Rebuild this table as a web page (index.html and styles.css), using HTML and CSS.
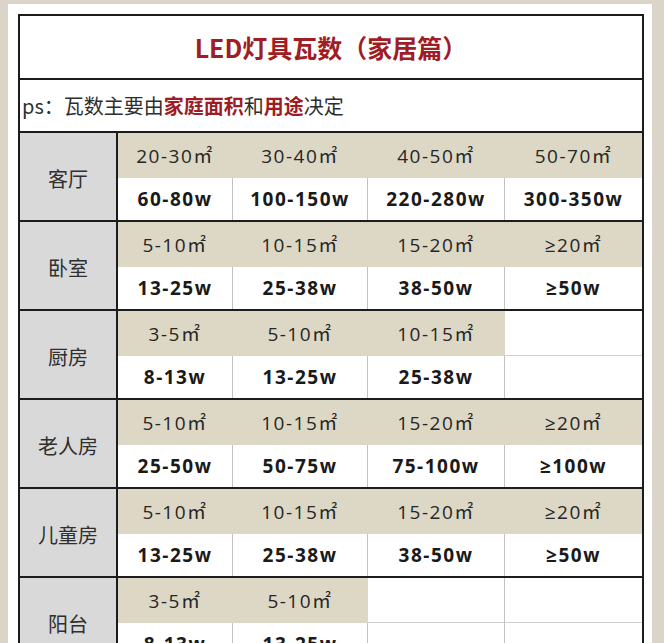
FILE: index.html
```html
<!DOCTYPE html>
<html lang="zh">
<head>
<meta charset="utf-8">
<title>LED灯具瓦数（家居篇）</title>
<link rel="stylesheet" href="styles.css">
</head>
<body>
<div class="paper">
  <div class="sheet">
    <div class="title">LED灯具瓦数（家居篇）</div>
    <div class="note">ps：瓦数主要由<b>家庭面积</b>和<b>用途</b>决定</div>

    <div class="group">
      <div class="label">客厅</div>
      <div class="cells">
        <div class="area">20-30㎡</div><div class="area">30-40㎡</div><div class="area">40-50㎡</div><div class="area last">50-70㎡</div>
        <div class="watt">60-80w</div><div class="watt">100-150w</div><div class="watt">220-280w</div><div class="watt last">300-350w</div>
      </div>
    </div>

    <div class="group">
      <div class="label">卧室</div>
      <div class="cells">
        <div class="area">5-10㎡</div><div class="area">10-15㎡</div><div class="area">15-20㎡</div><div class="area last">≥20㎡</div>
        <div class="watt">13-25w</div><div class="watt">25-38w</div><div class="watt">38-50w</div><div class="watt last">≥50w</div>
      </div>
    </div>

    <div class="group">
      <div class="label">厨房</div>
      <div class="cells">
        <div class="area">3-5㎡</div><div class="area">5-10㎡</div><div class="area">10-15㎡</div><div class="empty last"></div>
        <div class="watt">8-13w</div><div class="watt">13-25w</div><div class="watt">25-38w</div><div class="watt last"></div>
      </div>
    </div>

    <div class="group">
      <div class="label">老人房</div>
      <div class="cells">
        <div class="area">5-10㎡</div><div class="area">10-15㎡</div><div class="area">15-20㎡</div><div class="area last">≥20㎡</div>
        <div class="watt">25-50w</div><div class="watt">50-75w</div><div class="watt">75-100w</div><div class="watt last">≥100w</div>
      </div>
    </div>

    <div class="group">
      <div class="label">儿童房</div>
      <div class="cells">
        <div class="area">5-10㎡</div><div class="area">10-15㎡</div><div class="area">15-20㎡</div><div class="area last">≥20㎡</div>
        <div class="watt">13-25w</div><div class="watt">25-38w</div><div class="watt">38-50w</div><div class="watt last">≥50w</div>
      </div>
    </div>

    <div class="group">
      <div class="label">阳台</div>
      <div class="cells">
        <div class="area">3-5㎡</div><div class="area">5-10㎡</div><div class="empty"></div><div class="empty last"></div>
        <div class="watt">8-13w</div><div class="watt">13-25w</div><div class="watt"></div><div class="watt last"></div>
      </div>
    </div>
  </div>
</div>
</body>
</html>
```
FILE: styles.css
```css
html, body {
  margin: 0;
  padding: 0;
}
body {
  width: 664px;
  height: 643px;
  overflow: hidden;
  background: #dad5c8;
  font-family: "Noto Sans CJK SC", "Open Sans", sans-serif;
  color: #333;
}
.paper {
  margin: 4px 0 0 8px;
  width: 644px;
  height: 700px;
  background: #fff;
  padding: 10px 0 0 10px;
  box-sizing: border-box;
}
.sheet {
  width: 626px;
  border: 2px solid #1c1c1c;
  border-bottom: none;
  box-sizing: border-box;
}
.title {
  height: 62px;
  border-bottom: 2px solid #1c1c1c;
  display: flex;
  align-items: center;
  justify-content: center;
  font-family: "Noto Sans CJK SC", sans-serif;
  font-weight: bold;
  font-size: 25px;
  color: #9f1d25;
}
.note {
  height: 51px;
  border-bottom: 2px solid #1c1c1c;
  display: flex;
  align-items: center;
  padding-left: 2px;
  font-size: 20px;
  color: #2e2e2e;
}
.note b {
  color: #a01c24;
  font-weight: bold;
}
.group {
  display: flex;
  border-bottom: 2px solid #1c1c1c;
}
.label {
  width: 96px;
  flex: none;
  background: #d9d9d9;
  border-right: 2px solid #1c1c1c;
  display: flex;
  align-items: center;
  justify-content: center;
  padding-top: 4px;
  box-sizing: content-box;
  font-size: 20px;
  color: #2f2f2f;
}
.cells {
  flex: 1;
  display: grid;
  grid-template-columns: 115px 135px 137px 137px;
  grid-template-rows: 45px 42px;
}
.cells > div {
  box-sizing: border-box;
  display: flex;
  align-items: center;
  justify-content: center;
  font-family: "Open Sans", "Noto Sans CJK SC", sans-serif;
  font-size: 19px;
  letter-spacing: 1.5px;
  border-right: 1px solid #c2c2c2;
}
.cells > div.last {
  border-right: none;
}
.area {
  background: #ddd7c5;
  border-right-color: #ddd7c5 !important;
  border-bottom: 1px solid #ddd7c5;
  color: #262626;
}
.empty {
  background: #fff;
  border-bottom: 1px solid #cfcfcf;
}
.watt {
  background: #fff;
  font-weight: bold;
  color: #1a1a1a;
}
```
